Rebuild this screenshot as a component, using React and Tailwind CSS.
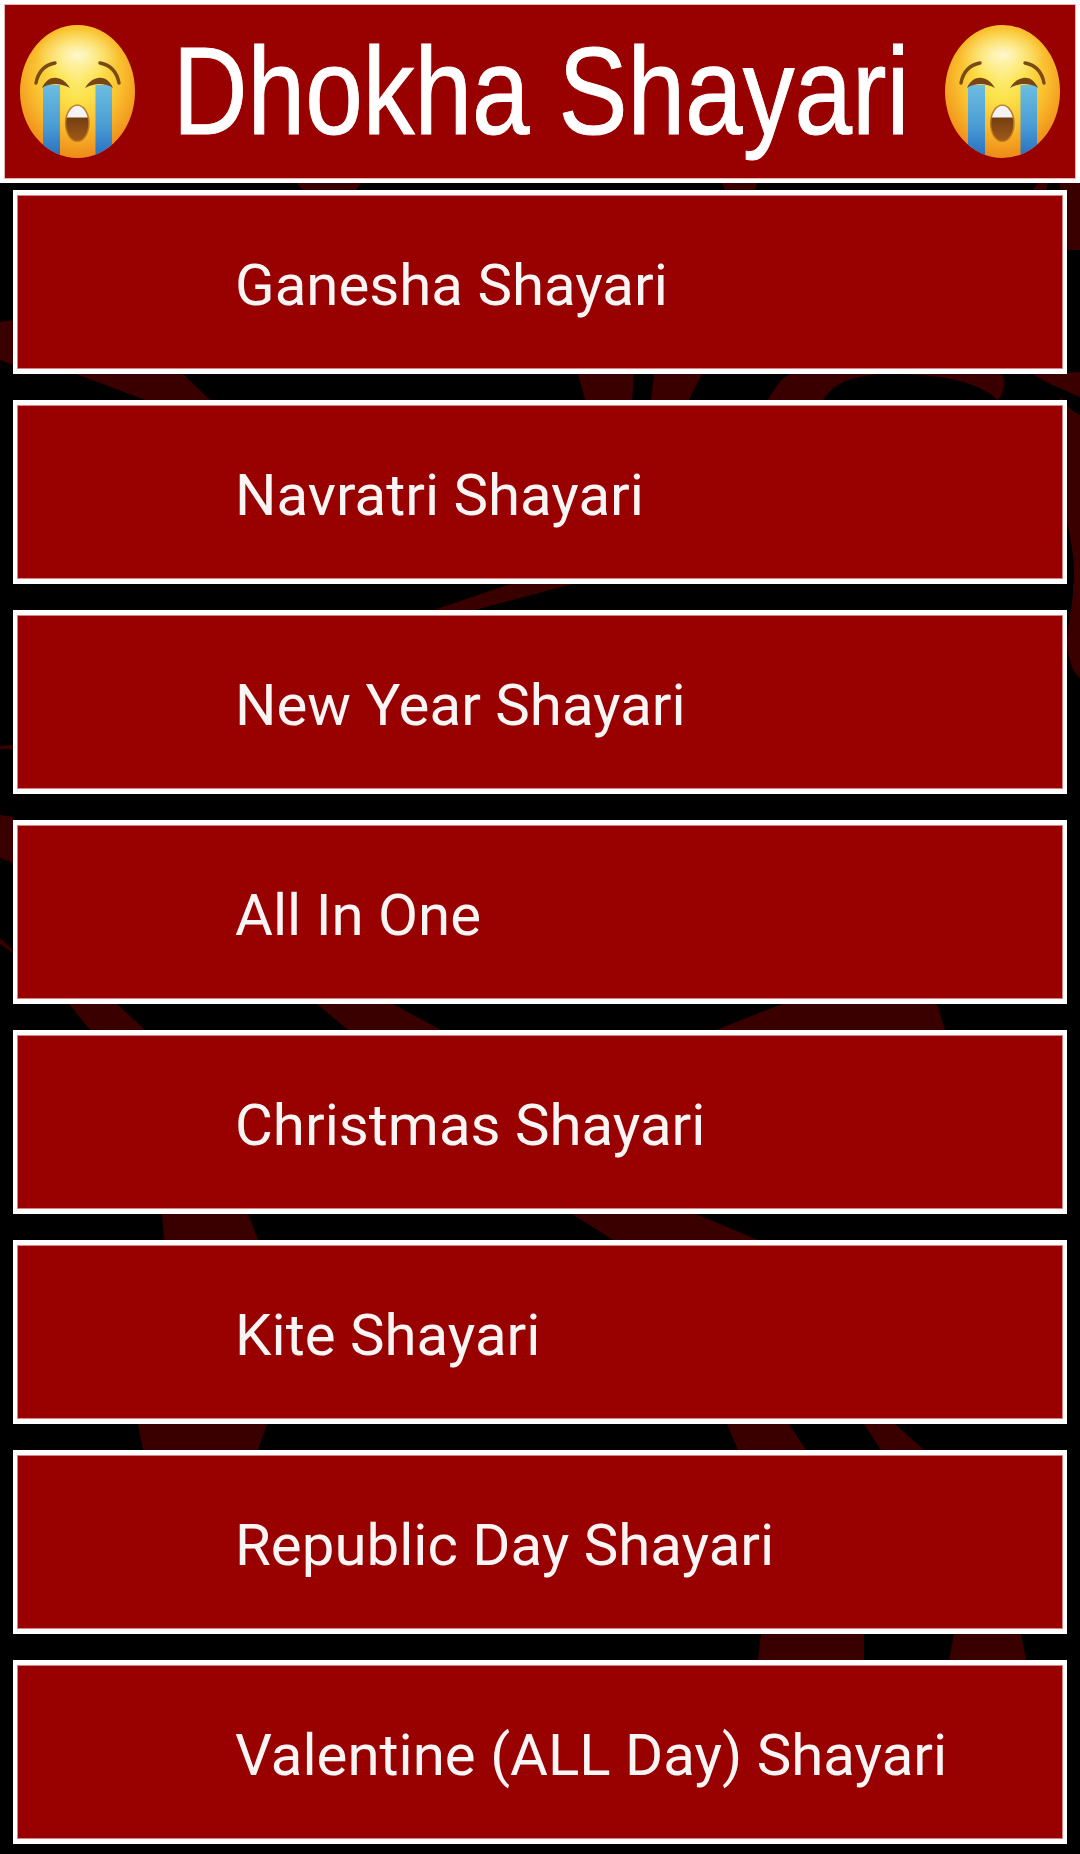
import React from "react";

const items = [
  "Ganesha Shayari",
  "Navratri Shayari",
  "New Year Shayari",
  "All In One",
  "Christmas Shayari",
  "Kite Shayari",
  "Republic Day Shayari",
  "Valentine (ALL Day) Shayari",
];

function CryingFace({ id }) {
  return (
    <svg viewBox="0 0 115 133" className="w-[115px] h-[133px] shrink-0 blur-[0.4px]">
      <defs>
        <radialGradient id={`${id}f`} cx="50%" cy="38%" r="62%">
          <stop offset="0%" stopColor="#fdeb78" />
          <stop offset="30%" stopColor="#fbe24a" />
          <stop offset="65%" stopColor="#f9bb2c" />
          <stop offset="100%" stopColor="#ee8a18" />
        </radialGradient>
        <radialGradient id={`${id}h`} cx="50%" cy="50%" r="50%">
          <stop offset="0%" stopColor="#fff8d8" stopOpacity="0.95" />
          <stop offset="100%" stopColor="#fff3b0" stopOpacity="0" />
        </radialGradient>
        <linearGradient id={`${id}t`} x1="0" y1="0" x2="0" y2="1">
          <stop offset="0%" stopColor="#6cbde0" />
          <stop offset="55%" stopColor="#4a9cd4" />
          <stop offset="100%" stopColor="#2369be" />
        </linearGradient>
        <linearGradient id={`${id}m`} x1="0" y1="0" x2="0" y2="1">
          <stop offset="0%" stopColor="#5c3010" />
          <stop offset="100%" stopColor="#a05a18" />
        </linearGradient>
        <clipPath id={`${id}c`}>
          <ellipse cx="57.5" cy="66.5" rx="57.5" ry="66.5" />
        </clipPath>
        <clipPath id={`${id}mc`}>
          <ellipse cx="57.3" cy="98.3" rx="11" ry="17.5" />
        </clipPath>
      </defs>
      <ellipse cx="57.5" cy="66.5" rx="57.5" ry="66.5" fill={`url(#${id}f)`} />
      <ellipse cx="57.5" cy="30" rx="42" ry="26" fill={`url(#${id}h)`} />
      <g clipPath={`url(#${id}c)`}>
        <path d="M23 60H40V135H23Z" fill={`url(#${id}t)`} />
        <path d="M75.5 60H92V135H75.5Z" fill={`url(#${id}t)`} />
      </g>
      <path d="M16 58C18 47 25 40 35 38" fill="none" stroke="#7a4a14" strokeWidth="3.4" strokeLinecap="round" />
      <path d="M99 58C97 47 90 40 80 38" fill="none" stroke="#7a4a14" strokeWidth="3.4" strokeLinecap="round" />
      <path d="M22 63C26 54 32 52 37 53C43 54 47 58 50 63C44 60 40 59 36 59C31 59 26 60 22 63Z" fill="#7a4514" />
      <path d="M93 63C89 54 83 52 78 53C72 54 68 58 65 63C71 60 75 59 79 59C84 59 89 60 93 63Z" fill="#7a4514" />
      <ellipse cx="57.3" cy="98.3" rx="12.4" ry="18.8" fill="#c07a1c" />
      <g clipPath={`url(#${id}mc)`}>
        <rect x="44" y="80" width="27" height="36" fill={`url(#${id}m)`} />
        <rect x="44" y="80" width="27" height="12.5" fill="#f4f2f2" />
      </g>
    </svg>
  );
}

function Pattern() {
  const c = "#3a0000";
  const polys = [
    "297,183 361,183 356,190 302,190",
    "722,183 757,183 755,190 725,190",
    "1033,190 1038,183 1048,183 1046,190",
    "1060,183 1080,183 1080,250 1060,250",
    "0,322 13,320 13,365 0,360",
    "76,374 183,374 210,400 145,400",
    "578,374 634,374 632,400 585,400",
    "654,374 702,374 689,400 651,400",
    "1033,374 1080,372 1080,397 1050,384",
    "434,610 510,584 572,584 475,610",
    "1073,584 1078,584 1078,610 1073,610",
    "0,746 13,745 13,749 0,749",
    "0,815 13,817 13,863 0,858",
    "0,938 13,950 13,953 0,944",
    "69,1004 117,1004 145,1030 90,1030",
    "317,1004 393,1004 441,1030 348,1030",
    "782,1004 937,1004 945,1030 716,1030",
    "162,1214 248,1214 258,1240 164,1240",
    "572,1214 696,1214 758,1240 613,1240",
    "138,1424 267,1424 258,1450 143,1450",
    "727,1424 789,1424 806,1450 738,1450",
    "864,1424 895,1424 924,1450 881,1450",
    "761,1634 864,1634 864,1660 758,1660",
    "954,1634 1021,1634 1026,1660 949,1660",
  ];
  return (
    <svg
      viewBox="0 0 1080 1854"
      className="absolute left-0 top-0 w-[1080px] h-[1854px]"
      aria-hidden="true"
    >
      {polys.map((p) => (
        <polygon key={p} points={p} fill={c} />
      ))}
      <path
        d="M768 400C780 378 788 374 792 374L1000 374C1010 380 1000 400 998 400C980 384 950 374 890 374C860 374 835 380 823 400Z"
        fill={c}
      />
      <path
        d="M1060 396C1068 410 1080 415 1080 415L1080 678C1070 670 1067 650 1067 640C1070 610 1074 600 1074 572C1074 550 1068 530 1067 520L1060 396Z"
        fill={c}
      />
    </svg>
  );
}

export default function App() {
  return (
    <div className="relative w-[1080px] min-h-[1854px] bg-black overflow-hidden font-['Roboto',sans-serif]">
      <Pattern />
      <header className="relative bg-white p-1 h-[183px]">
        <div className="flex items-center h-[175px] bg-[#990000] border border-[#e2b4b4] px-[15px] overflow-hidden">
          <CryingFace id="a" />
          <div className="flex-1 min-w-0 flex justify-center">
            <span className="shrink-0 whitespace-nowrap text-white text-[124px] leading-none font-['Liberation_Sans',sans-serif] [-webkit-text-stroke:1px_white] scale-x-[0.835] translate-x-[1px] -translate-y-[1px] blur-[0.5px]">
              Dhokha Shayari
            </span>
          </div>
          <CryingFace id="b" />
        </div>
      </header>
      <main className="relative flex flex-col gap-[26px] mx-[13px] mt-[7px]">
        {items.map((t) => (
          <div
            key={t}
            className="h-[184px] border-x-4 border-y-[5px] border-white bg-[#990000] shadow-[inset_0_0_0_1px_#d98484] flex items-center pl-[218px]"
          >
            <span className="text-[58.2px] leading-none text-[#f9f5f5] translate-y-[3px] whitespace-nowrap">{t}</span>
          </div>
        ))}
      </main>
    </div>
  );
}
